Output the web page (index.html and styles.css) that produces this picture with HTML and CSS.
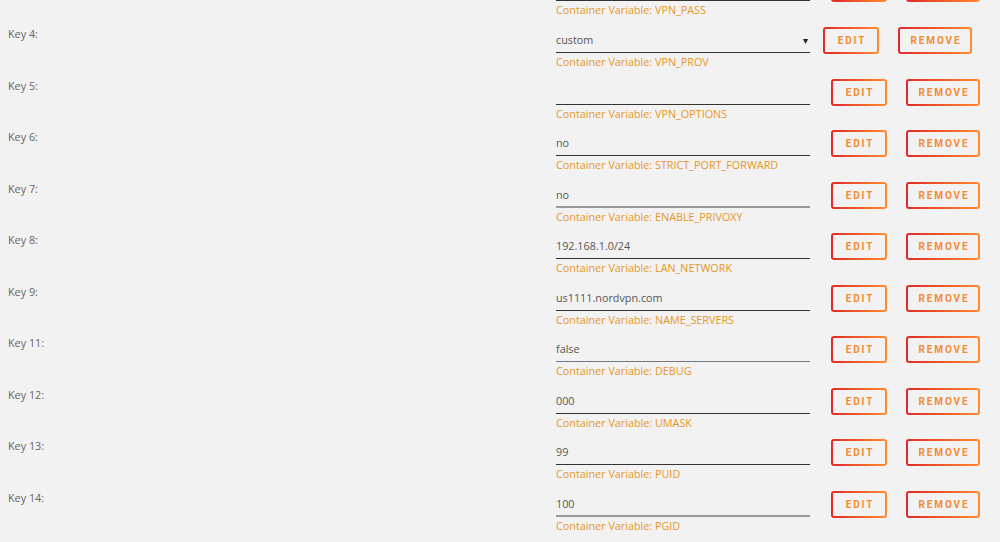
FILE: index.html
```html
<!DOCTYPE html>
<html>
<head>
<meta charset="utf-8">
<link rel="stylesheet" href="styles.css">
</head>
<body>
<div class="page">
  <div class="row row--tall">
    <div class="key"></div>
    <div class="field">
      <div class="line">
        <div class="input input--tall"></div>
        <div class="btns"><span class="btn btn--edit"></span><span class="btn btn--remove"></span></div>
      </div>
      <div class="var">Container Variable: VPN_PASS</div>
    </div>
  </div>
  <div class="row">
    <div class="key">Key 4:</div>
    <div class="field">
      <div class="line">
        <div class="input input--select"><span>custom</span><span class="caret">&#9662;</span></div>
        <div class="btns"><span class="btn btn--edit">Edit</span><span class="btn btn--remove">Remove</span></div>
      </div>
      <div class="var">Container Variable: VPN_PROV</div>
    </div>
  </div>
  <div class="row">
    <div class="key">Key 5:</div>
    <div class="field">
      <div class="line">
        <div class="input"></div>
        <div class="btns"><span class="btn btn--edit">Edit</span><span class="btn btn--remove">Remove</span></div>
      </div>
      <div class="var">Container Variable: VPN_OPTIONS</div>
    </div>
  </div>
  <div class="row">
    <div class="key">Key 6:</div>
    <div class="field">
      <div class="line">
        <div class="input">no</div>
        <div class="btns"><span class="btn btn--edit">Edit</span><span class="btn btn--remove">Remove</span></div>
      </div>
      <div class="var">Container Variable: STRICT_PORT_FORWARD</div>
    </div>
  </div>
  <div class="row">
    <div class="key">Key 7:</div>
    <div class="field">
      <div class="line">
        <div class="input input--light">no</div>
        <div class="btns"><span class="btn btn--edit">Edit</span><span class="btn btn--remove">Remove</span></div>
      </div>
      <div class="var">Container Variable: ENABLE_PRIVOXY</div>
    </div>
  </div>
  <div class="row">
    <div class="key">Key 8:</div>
    <div class="field">
      <div class="line">
        <div class="input">192.168.1.0/24</div>
        <div class="btns"><span class="btn btn--edit">Edit</span><span class="btn btn--remove">Remove</span></div>
      </div>
      <div class="var">Container Variable: LAN_NETWORK</div>
    </div>
  </div>
  <div class="row">
    <div class="key">Key 9:</div>
    <div class="field">
      <div class="line">
        <div class="input">us1111.nordvpn.com</div>
        <div class="btns"><span class="btn btn--edit">Edit</span><span class="btn btn--remove">Remove</span></div>
      </div>
      <div class="var">Container Variable: NAME_SERVERS</div>
    </div>
  </div>
  <div class="row">
    <div class="key">Key 11:</div>
    <div class="field">
      <div class="line">
        <div class="input input--mid">false</div>
        <div class="btns"><span class="btn btn--edit">Edit</span><span class="btn btn--remove">Remove</span></div>
      </div>
      <div class="var">Container Variable: DEBUG</div>
    </div>
  </div>
  <div class="row">
    <div class="key">Key 12:</div>
    <div class="field">
      <div class="line">
        <div class="input">000</div>
        <div class="btns"><span class="btn btn--edit">Edit</span><span class="btn btn--remove">Remove</span></div>
      </div>
      <div class="var">Container Variable: UMASK</div>
    </div>
  </div>
  <div class="row">
    <div class="key">Key 13:</div>
    <div class="field">
      <div class="line">
        <div class="input">99</div>
        <div class="btns"><span class="btn btn--edit">Edit</span><span class="btn btn--remove">Remove</span></div>
      </div>
      <div class="var">Container Variable: PUID</div>
    </div>
  </div>
  <div class="row">
    <div class="key">Key 14:</div>
    <div class="field">
      <div class="line">
        <div class="input input--light">100</div>
        <div class="btns"><span class="btn btn--edit">Edit</span><span class="btn btn--remove">Remove</span></div>
      </div>
      <div class="var">Container Variable: PGID</div>
    </div>
  </div>
</div>
</body>
</html>
```

FILE: styles.css
```css
html, body {
  margin: 0;
  padding: 0;
  background: #f2f2f2;
  overflow: hidden;
}
body {
  font-family: "Open Sans", "Liberation Sans", sans-serif;
  font-size: 10.8px;
  color: #555;
}
.page {
  margin-top: -54px;
}
.row {
  display: flex;
  height: 51.56px;
  box-sizing: border-box;
}
.row--tall {
  height: 80px;
}
.key {
  width: 556px;
  padding-left: 8px;
  box-sizing: border-box;
  line-height: 16px;
  color: #666;
  flex: none;
}
.field {
  padding-top: 2px;
  display: flex;
  flex-direction: column;
}
.row--tall .field {
  padding-top: 30.44px;
}
.line {
  display: flex;
  align-items: flex-end;
  height: 26px;
}
.input {
  width: 254px;
  height: 22px;
  box-sizing: border-box;
  border-bottom: 1px solid #333;
  line-height: 18px;
  color: #555;
  margin-right: 21px;
  margin-bottom: 1px;
  display: flex;
  justify-content: space-between;
}
.input--light {
  border-bottom: 2px solid #999;
}
.input--mid {
  border-bottom-color: #777;
}
.input--select {
  margin-right: 13px;
}
.caret {
  font-size: 10px;
  color: #222;
  padding-right: 2px;
}
.btns {
  display: flex;
  gap: 19px;
}
.btn {
  display: flex;
  align-items: center;
  justify-content: center;
  height: 27px;
  box-sizing: border-box;
  border: 2px solid transparent;
  border-radius: 3px;
  background: linear-gradient(#f2f2f2, #f2f2f2) padding-box,
              linear-gradient(90deg, #e22828, #ff8c2f) border-box;
  color: #f48a35;
  font-family: Roboto, "Liberation Sans", sans-serif;
  font-weight: bold;
  font-size: 10px;
  letter-spacing: 1.9px;
  text-transform: uppercase;
  padding-left: 2px;
}
.btn--edit {
  width: 56px;
}
.btn--remove {
  width: 74px;
}
.var {
  margin-top: 1px;
  line-height: 14px;
  color: #e8961f;
}
```
